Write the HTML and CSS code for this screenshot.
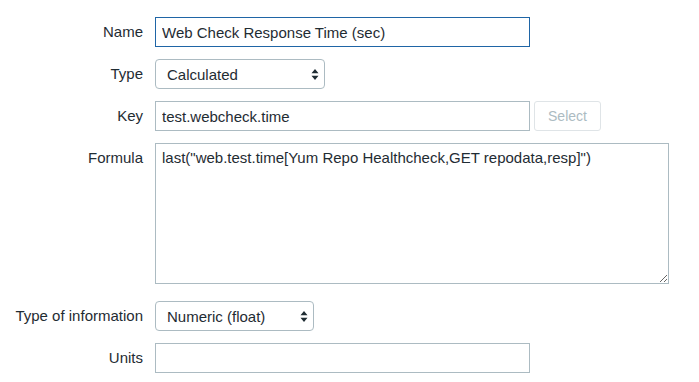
FILE: index.html
```html
<!DOCTYPE html>
<html>
<head>
<meta charset="utf-8">
<link rel="stylesheet" href="styles.css">
</head>
<body>
<div class="form">
  <label class="lbl">Name</label>
  <div class="ctl"><input class="inp inp-wide focused" type="text" value="Web Check Response Time (sec)"></div>

  <label class="lbl">Type</label>
  <div class="ctl">
    <div class="sel sel-type"><span>Calculated</span>
      <svg class="arr" width="8" height="11" viewBox="0 0 8 11"><path d="M4 0 L7.5 4.2 L0.5 4.2 Z M4 11 L7.5 6.8 L0.5 6.8 Z" fill="#1f2c33"/></svg>
    </div>
  </div>

  <label class="lbl">Key</label>
  <div class="ctl row">
    <input class="inp inp-wide" type="text" value="test.webcheck.time">
    <button class="btn" disabled>Select</button>
  </div>

  <label class="lbl lbl-top">Formula</label>
  <div class="ctl"><textarea class="ta">last("web.test.time[Yum Repo Healthcheck,GET repodata,resp]")</textarea></div>

  <label class="lbl">Type of information</label>
  <div class="ctl">
    <div class="sel sel-info"><span>Numeric (float)</span>
      <svg class="arr" width="8" height="11" viewBox="0 0 8 11"><path d="M4 0 L7.5 4.2 L0.5 4.2 Z M4 11 L7.5 6.8 L0.5 6.8 Z" fill="#1f2c33"/></svg>
    </div>
  </div>

  <label class="lbl">Units</label>
  <div class="ctl"><input class="inp inp-wide" type="text" value=""></div>
</div>
</body>
</html>
```
FILE: styles.css
```css
html, body {
  margin: 0;
  padding: 0;
  background: #ffffff;
}
body {
  font-family: "Liberation Sans", Arial, Helvetica, sans-serif;
  font-size: 15px;
  color: #1f2c33;
}
.form {
  display: grid;
  grid-template-columns: 143px auto;
  column-gap: 12px;
  row-gap: 12px;
  padding-top: 17px;
  align-items: center;
}
.lbl {
  text-align: right;
  white-space: nowrap;
  line-height: 18px;
  color: #1f2c33;
}
.lbl-top {
  align-self: start;
  padding-top: 6px;
}
.ctl {
  display: flex;
  align-items: center;
}
.row {
  gap: 4px;
}
.inp {
  box-sizing: border-box;
  height: 30px;
  border: 1px solid #acbbc2;
  border-radius: 0;
  padding: 0 6px;
  font: inherit;
  color: #1f2c33;
  background: #fff;
  outline: none;
  margin: 0;
}
.inp-wide {
  width: 375px;
}
.focused {
  border-color: #1f65a6;
}
.sel {
  box-sizing: border-box;
  height: 30px;
  border: 1px solid #acbbc2;
  border-radius: 4px;
  display: flex;
  align-items: center;
  justify-content: space-between;
  padding: 0 5px 0 11px;
  background: #fff;
}
.sel-type { width: 170px; }
.sel-info { width: 159px; }
.arr { display: block; }
.btn {
  box-sizing: border-box;
  width: 67px;
  height: 30px;
  border: 1px solid #dfe4e7;
  border-radius: 3px;
  background: #fff;
  color: #acbbc2;
  font: inherit;
  font-size: 14px;
  padding: 0;
  margin: 0;
}
.ta {
  box-sizing: border-box;
  width: 514px;
  height: 141px;
  border: 1px solid #acbbc2;
  border-radius: 0;
  padding: 5px 6px;
  font: inherit;
  line-height: 18px;
  color: #1f2c33;
  resize: both;
  outline: none;
  margin: 0 0 5px 0;
  display: block;
}
```
